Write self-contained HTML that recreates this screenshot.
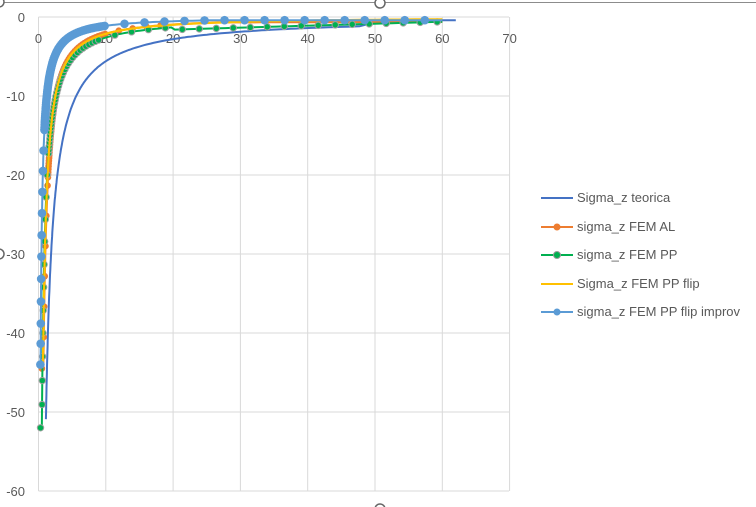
<!DOCTYPE html>
<html><head><meta charset="utf-8"><style>
html,body{margin:0;padding:0;background:#fff;width:756px;height:507px;overflow:hidden}
text{font-family:"Liberation Sans",sans-serif;font-size:13px;fill:#595959}
</style></head><body>
<svg id="s" width="756" height="507" xmlns="http://www.w3.org/2000/svg">
<line x1="0" y1="2.5" x2="756" y2="2.5" stroke="#8c8c8c" stroke-width="1"/>
<circle cx="380" cy="3" r="5" fill="#fff" stroke="#666" stroke-width="1.5"/>
<circle cx="-1" cy="2" r="5" fill="#fff" stroke="#666" stroke-width="1.5"/>
<circle cx="380" cy="509" r="5" fill="#fff" stroke="#666" stroke-width="1.5"/>
<circle cx="-1" cy="254" r="5" fill="#fff" stroke="#666" stroke-width="1.5"/>
<g id="grid" stroke="#d9d9d9" stroke-width="1"></g>
<g id="lab"></g>
<g id="curves"></g>
<g font-size="12">
<line x1="541" y1="198" x2="573" y2="198" stroke="#4472c4" stroke-width="2"/>
<text x="577" y="202">Sigma_z teorica</text>
<line x1="541" y1="227" x2="573" y2="227" stroke="#ed7d31" stroke-width="2"/><circle cx="557" cy="227" r="3.5" fill="#ed7d31"/>
<text x="577" y="231">sigma_z FEM AL</text>
<line x1="541" y1="255" x2="573" y2="255" stroke="#00b050" stroke-width="2"/><circle cx="557" cy="255" r="3.5" fill="#00b050" stroke="#999" stroke-width="1"/>
<text x="577" y="259">sigma_z FEM PP</text>
<line x1="541" y1="284" x2="573" y2="284" stroke="#ffc000" stroke-width="2"/>
<text x="577" y="288">Sigma_z FEM PP flip</text>
<line x1="541" y1="312" x2="573" y2="312" stroke="#5b9bd5" stroke-width="2"/><circle cx="557" cy="312" r="3.5" fill="#5b9bd5"/>
<text x="577" y="316">sigma_z FEM PP flip improv</text>
</g>
</svg>
<script>
var NS="http://www.w3.org/2000/svg";
function X(v){return 38.5+v*6.73}
function Y(v){return 17-v*7.9}
function el(p,t,a){var e=document.createElementNS(NS,t);for(var k in a)e.setAttribute(k,a[k]);p.appendChild(e);return e}
var g=document.getElementById('grid'),lab=document.getElementById('lab'),c=document.getElementById('curves');
for(var i=0;i<=7;i++){el(g,'line',{x1:X(i*10),y1:17,x2:X(i*10),y2:491});var t=el(lab,'text',{x:X(i*10),y:43,'text-anchor':'middle'});t.textContent=i*10;}
for(var j=0;j<=6;j++){el(g,'line',{x1:38.5,y1:Y(-j*10),x2:509,y2:Y(-j*10)});var t=el(lab,'text',{x:25,y:Y(-j*10)+5,'text-anchor':'end'});t.textContent=j==0?'0':'-'+(j*10);}
function path(f,x0,x1,n,col,w){var d='';for(var i=0;i<=n;i++){var x=x0*Math.pow(x1/x0,i/n);d+=(i?'L':'M')+X(x).toFixed(1)+','+Y(f(x)).toFixed(1)}el(c,'path',{d:d,fill:'none',stroke:col,'stroke-width':w||2});}
function dotsArc(f,x0,x1,sf,col,r,st){
  var px=X(x0),py=Y(f(x0)),lx=px,ly=py;
  function put(x,y){var a={cx:x,cy:y,r:r,fill:col};if(st){a.stroke=st;a['stroke-width']=1}el(c,'circle',a)}
  put(px,py);
  for(var x=x0;x<=x1;x+=0.005){var cx=X(x),cy=Y(f(x));var d=Math.hypot(cx-lx,cy-ly);if(d>=sf(x)){put(cx,cy);lx=cx;ly=cy;}}
}
var teo=function(x){return x<48?-56/x:(x<50?-1.17+(x-48)*0.33:-0.5+(x-50)*0.008)};
var al=function(x){var v=Math.max(-30/Math.pow(x,1.15),-44.5);return x>15?Math.min(-0.7+(x-15)*0.002,v):v};
var pp=function(x){var v=Math.max(-26/x,-52);return x>20?-1.6+(x-20)*0.025:v};
var fl=function(x){return Math.max(-28/Math.pow(x,1.12),-44)};
var im=function(x){var v=Math.max(-12.5/Math.pow(x,1.05),-44);return x>25?-0.4:v};
path(teo,1.1,62,200,'#4472c4',2);
path(al,0.5,60,200,'#ed7d31',2.2);
dotsArc(al,0.5,19,function(x){return x<1.4?30:(x<10?2.5:14)},'#ed7d31',3.3);
path(pp,0.3,60,200,'#00b050',2);
dotsArc(pp,0.3,60,function(x){return x<1.5?22:(x<9?3.5:17)},'#00b050',3.2,'#a0a0a0');
path(fl,0.6,60,200,'#ffc000',2.2);
path(im,0.28,60,200,'#5b9bd5',2);
dotsArc(im,0.28,60,function(x){return x<0.9?20:(x<10?2:20)},'#5b9bd5',4.3);
</script>
</body></html>
